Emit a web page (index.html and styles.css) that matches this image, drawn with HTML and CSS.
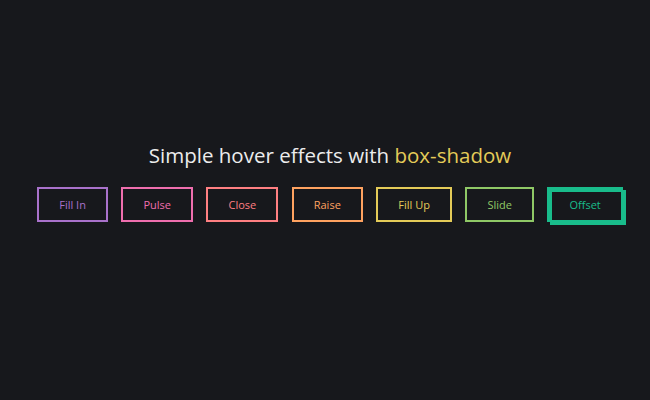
FILE: index.html
```html
<!DOCTYPE html>
<html lang="en">
<head>
  <meta charset="UTF-8">
  <meta name="viewport" content="width=device-width, initial-scale=1.0">
  <title>Box-shadow hover effects</title>
  <link rel="stylesheet" href="styles.css">
</head>
<body>
  <div class="container">
    <h1>Simple hover effects with <code>box-shadow</code></h1>
    <div class="buttons">
      <button class="fill">Fill In</button>
      <button class="pulse">Pulse</button>
      <button class="close">Close</button>
      <button class="raise">Raise</button>
      <button class="up">Fill Up</button>
      <button class="slide">Slide</button>
      <button class="offset">Offset</button>
    </div>
  </div>
</body>
</html>
```

FILE: styles.css
```css
body {
  margin: 0;
  min-height: 100vh;
  display: flex;
  align-items: center;
  justify-content: center;
  background: #17181c;
  color: #fff;
  font: 400 11px "Open Sans", sans-serif;
  text-align: center;
}

.container {
  display: flex;
  flex-direction: column;
  align-items: center;
  margin-top: -37px;
  padding-left: 10px;
}

h1 {
  font-weight: 400;
  font-size: 20.5px;
  margin: 0 0 18px;
  color: #ececec;
}

code {
  color: #e4cb58;
  font: inherit;
}

.buttons {
  display: flex;
  gap: 13.5px;
}

button {
  --color: #fff;
  background: none;
  border: 2px solid var(--color);
  color: var(--color);
  font: inherit;
  line-height: 1;
  padding: 10px 20px;
  cursor: pointer;
  transition: 0.25s;
}

button:hover {
  color: #fff;
}

.fill   { --color: #a972cb; }
.pulse  { --color: #ef6eae; }
.close  { --color: #ff7f82; }
.raise  { --color: #ffa260; }
.up     { --color: #e4cb58; }
.slide  { --color: #8fc866; }

.offset {
  --color: #19bc8b;
  box-shadow: 3px 3px 0 0 var(--color), inset 3px 3px 0 0 var(--color);
}

.fill:hover { box-shadow: inset 0 0 0 2em #cb72aa; }
.offset:hover { box-shadow: 0 0 0 0 #1973bc, inset 6em 3.5em 0 0 #1973bc; }
```
